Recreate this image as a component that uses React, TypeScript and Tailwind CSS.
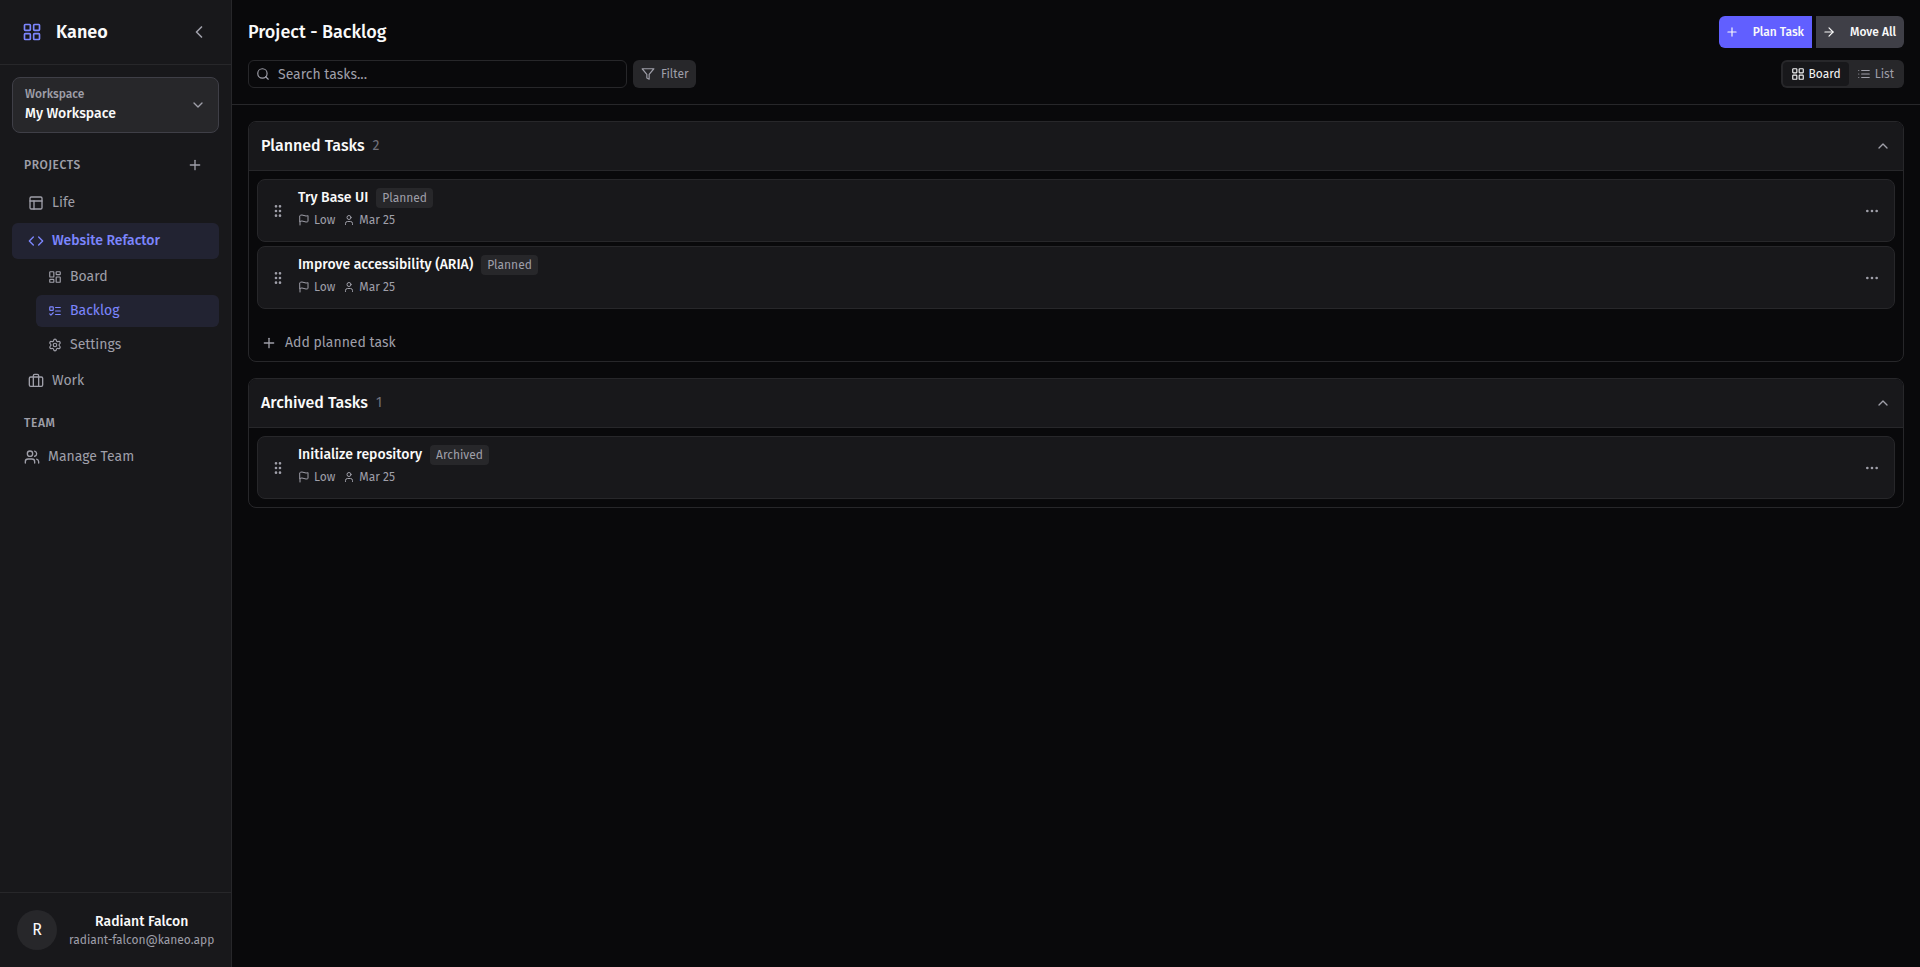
import { useState } from "react";
import type { ComponentType, ReactNode } from "react";
import {
  ArrowRight,
  Briefcase,
  ChevronDown,
  ChevronLeft,
  ChevronUp,
  Code,
  Ellipsis,
  GripVertical,
  LayoutDashboard,
  LayoutGrid,
  PanelsTopLeft,
  Plus,
  Search,
  Settings,
  User,
  Users,
} from "lucide-react";

type IconProps = { className?: string };
type Icon = ComponentType<IconProps>;
type Task = { title: string; priority: string; date: string };

const planned: Task[] = [
  { title: "Try Base UI", priority: "Low", date: "Mar 25" },
  { title: "Improve accessibility (ARIA)", priority: "Low", date: "Mar 25" },
];

const archived: Task[] = [
  { title: "Initialize repository", priority: "Low", date: "Mar 25" },
];

function StrokeIcon({ className, children }: { className?: string; children: ReactNode }) {
  return (
    <svg
      viewBox="0 0 24 24"
      fill="none"
      stroke="currentColor"
      strokeWidth="2"
      strokeLinecap="round"
      strokeLinejoin="round"
      aria-hidden="true"
      className={className}
    >
      {children}
    </svg>
  );
}

function ListIcon({ className }: IconProps) {
  return (
    <StrokeIcon className={className}>
      <path d="M3 12h.01M3 18h.01M3 6h.01M8 12h13M8 18h13M8 6h13" />
    </StrokeIcon>
  );
}

function ListTodoIcon({ className }: IconProps) {
  return (
    <StrokeIcon className={className}>
      <rect x="3" y="5" width="6" height="6" rx="1" />
      <path d="m3 17 2 2 4-4M13 6h8M13 12h8M13 18h8" />
    </StrokeIcon>
  );
}

function FilterIcon({ className }: IconProps) {
  return (
    <StrokeIcon className={className}>
      <polygon points="22 3 2 3 10 12.46 10 19 14 21 14 12.46 22 3" />
    </StrokeIcon>
  );
}

function FlagIcon({ className }: IconProps) {
  return (
    <StrokeIcon className={className}>
      <path d="M4 15s1-1 4-1 5 2 8 2 4-1 4-1V3s-1 1-4 1-5-2-8-2-4 1-4 1zM4 22v-7" />
    </StrokeIcon>
  );
}

function ProjectLink({ icon: Icon, label, active }: { icon: Icon; label: string; active?: boolean }) {
  return (
    <a
      href="#"
      className={`flex h-9 items-center gap-2 rounded-md px-4 text-sm ${
        active ? "bg-indigo-400/10 font-medium text-indigo-400" : "text-zinc-400"
      }`}
    >
      <Icon className="size-4" />
      {label}
    </a>
  );
}

function SubLink({ icon: Icon, label, active }: { icon: Icon; label: string; active?: boolean }) {
  return (
    <a
      href="#"
      className={`flex h-8 items-center gap-2 rounded-md px-3 text-sm ${
        active ? "bg-indigo-400/10 text-indigo-400" : "text-zinc-400"
      }`}
    >
      <Icon className="size-3.5" />
      {label}
    </a>
  );
}

function Sidebar() {
  return (
    <aside className="flex w-58 shrink-0 flex-col border-r border-zinc-800 bg-zinc-900">
      <div className="box-content flex h-16 items-center border-b border-zinc-800 px-5.5">
        <LayoutGrid className="size-5 text-indigo-400" />
        <span className="ml-3.5 text-lg font-semibold text-zinc-50">Kaneo</span>
        <button type="button" aria-label="Collapse sidebar" className="ml-auto text-zinc-400">
          <ChevronLeft className="size-5" />
        </button>
      </div>

      <div className="flex flex-1 flex-col px-3 pt-3">
        <button
          type="button"
          className="flex h-14 items-center justify-between rounded-lg border border-zinc-700 bg-zinc-800 px-3 text-left"
        >
          <span className="flex flex-col pt-0.5">
            <span className="text-xs leading-4 font-medium text-zinc-400">Workspace</span>
            <span className="text-sm leading-6 font-medium text-zinc-50">My Workspace</span>
          </span>
          <ChevronDown className="size-4 text-zinc-400" />
        </button>

        <div className="mt-5 flex h-6 items-center justify-between px-3">
          <h2 className="text-xs font-medium tracking-wider text-zinc-400">PROJECTS</h2>
          <button type="button" aria-label="Add project" className="mr-1 text-zinc-400">
            <Plus className="size-4" />
          </button>
        </div>

        <nav aria-label="Projects" className="mt-2 flex flex-col gap-0.5">
          <ProjectLink icon={PanelsTopLeft} label="Life" />
          <ProjectLink icon={Code} label="Website Refactor" active />
          <div className="ml-6 flex flex-col gap-0.5">
            <SubLink icon={LayoutDashboard} label="Board" />
            <SubLink icon={ListTodoIcon} label="Backlog" active />
            <SubLink icon={Settings} label="Settings" />
          </div>
          <ProjectLink icon={Briefcase} label="Work" />
        </nav>

        <h2 className="mt-4 px-3 text-xs font-medium tracking-wider text-zinc-400">TEAM</h2>
        <a href="#" className="mt-2 flex h-9 items-center gap-2 px-3 text-sm text-zinc-400">
          <Users className="size-4" />
          Manage Team
        </a>
      </div>

      <button type="button" className="flex items-center gap-3 border-t border-zinc-800 py-[17px] pr-4 pl-[17px]">
        <span className="flex size-10 shrink-0 items-center justify-center rounded-full bg-zinc-800 text-base text-zinc-50">
          R
        </span>
        <span className="flex flex-col text-center whitespace-nowrap">
          <span className="text-sm font-medium text-zinc-50">Radiant Falcon</span>
          <span className="text-xs text-zinc-400">radiant-falcon@kaneo.app</span>
        </span>
      </button>
    </aside>
  );
}

function TaskCard({ task, status }: { task: Task; status: string }) {
  return (
    <li className="flex items-center rounded-lg border border-zinc-800 bg-zinc-900 px-3">
      <button type="button" aria-label="Drag task" className="text-zinc-400">
        <GripVertical className="size-4" />
      </button>
      <div className="ml-3 flex-1 pt-2 pb-[13px]">
        <div className="flex h-5 items-center gap-2">
          <h3 className="text-sm font-medium text-zinc-50">{task.title}</h3>
          <span className="rounded bg-zinc-800 px-1.5 py-0.5 text-xs text-zinc-400">{status}</span>
        </div>
        <div className="mt-1 flex h-4 items-center gap-2 text-xs text-zinc-400">
          <span className="flex items-center gap-1">
            <FlagIcon className="size-3" />
            {task.priority}
          </span>
          <span className="flex items-center gap-1">
            <User className="size-3" />
            {task.date}
          </span>
        </div>
      </div>
      <button type="button" aria-label="Task actions" className="mr-0.5 text-zinc-400">
        <Ellipsis className="size-4" />
      </button>
    </li>
  );
}

function TaskSection({ title, tasks, status, addLabel }: { title: string; tasks: Task[]; status: string; addLabel?: string }) {
  const [open, setOpen] = useState(true);
  return (
    <section className="overflow-hidden rounded-lg border border-zinc-800">
      <header className="flex items-center border-b border-zinc-800 bg-zinc-900 px-3 py-3">
        <h2 className="text-base font-medium text-zinc-50">{title}</h2>
        <span className="ml-2 text-sm text-zinc-500">{tasks.length}</span>
        <button
          type="button"
          aria-label={`Toggle ${title}`}
          aria-expanded={open}
          onClick={() => setOpen(!open)}
          className="ml-auto text-zinc-400"
        >
          <ChevronUp className="size-4" />
        </button>
      </header>
      {open && (
        <ul className="flex flex-col gap-1 p-2">
          {tasks.map((task) => (
            <TaskCard key={task.title} task={task} status={status} />
          ))}
        </ul>
      )}
      {open && addLabel && (
        <button type="button" className="mt-2 flex h-9 w-full items-center gap-2 px-3 text-sm text-zinc-400">
          <Plus className="size-4" />
          {addLabel}
        </button>
      )}
    </section>
  );
}

export default function App() {
  return (
    <div className="flex min-h-screen bg-zinc-950 font-['Fira_Sans',Roboto,sans-serif]">
      <Sidebar />
      <main className="flex min-w-0 flex-1 flex-col">
        <header className="border-b border-zinc-800 p-4">
          <div className="flex h-8 items-center justify-between">
            <h1 className="text-lg font-medium text-zinc-50">Project - Backlog</h1>
            <div className="flex gap-1">
              <button
                type="button"
                className="flex h-8 items-center gap-3.5 rounded-l-md bg-indigo-500 pr-2 pl-1.5 text-xs font-medium text-zinc-50"
              >
                <Plus className="size-3.5" />
                Plan Task
              </button>
              <button
                type="button"
                className="flex h-8 items-center gap-3.5 rounded-r-md bg-zinc-700 pr-2 pl-1.5 text-xs font-medium text-zinc-50"
              >
                <ArrowRight className="size-3.5" />
                Move All
              </button>
            </div>
          </div>
          <div className="mt-3 flex h-7 items-center justify-between">
            <div className="flex gap-1.5">
              <label className="flex h-7 w-[379px] items-center gap-2 rounded-md border border-zinc-800 px-[7px] text-zinc-400">
                <Search className="size-3.5" />
                <input
                  type="text"
                  aria-label="Search tasks"
                  placeholder="Search tasks..."
                  className="min-w-0 flex-1 bg-transparent pt-0.5 text-sm text-zinc-100 outline-none placeholder:text-zinc-400"
                />
              </label>
              <button type="button" className="flex h-7 items-center gap-1.5 rounded-md bg-zinc-800 pr-[7px] pl-2 text-xs text-zinc-400">
                <FilterIcon className="size-3.5" />
                Filter
              </button>
            </div>
            <div className="flex h-7 rounded-md bg-zinc-800 p-0.5 text-xs">
              <button type="button" aria-pressed="true" className="flex items-center gap-1 rounded bg-zinc-900 px-2 text-zinc-100">
                <LayoutGrid className="size-3.5" />
                Board
              </button>
              <button type="button" aria-pressed="false" className="flex items-center gap-1 rounded px-2 text-zinc-400">
                <ListIcon className="size-3.5" />
                List
              </button>
            </div>
          </div>
        </header>
        <div className="flex flex-col gap-4 p-4">
          <TaskSection title="Planned Tasks" tasks={planned} status="Planned" addLabel="Add planned task" />
          <TaskSection title="Archived Tasks" tasks={archived} status="Archived" />
        </div>
      </main>
    </div>
  );
}
